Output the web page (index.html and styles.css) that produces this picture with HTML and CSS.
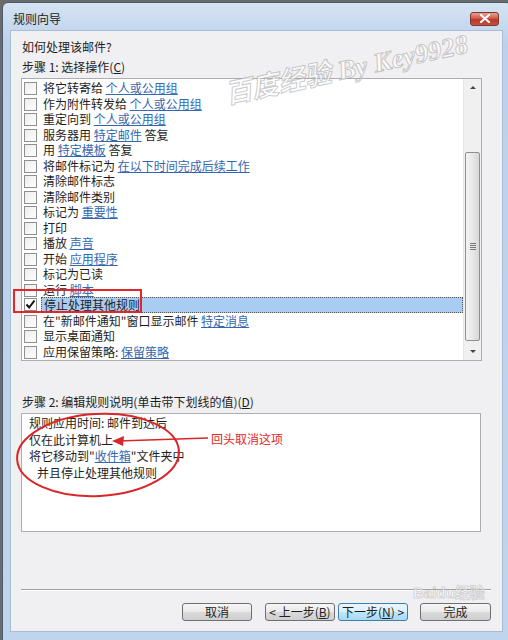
FILE: index.html
```html
<!DOCTYPE html>
<html>
<head>
    <meta charset="utf-8">
    <title>规则向导</title>
    <link rel="stylesheet" href="styles.css">
</head>
<body>
    <div class="window">
        <div class="titlebar">
            <span class="title">规则向导</span>
            <div class="close-btn">
                <svg width="12" height="9" viewBox="0 0 12 9"><path d="M2 1 L10 8 M10 1 L2 8" stroke="#fff" stroke-width="2.2" stroke-linecap="round"/></svg>
            </div>
        </div>

        <div class="client">
            <div class="label">如何处理该邮件?</div>
            <div class="label">步骤 1: 选择操作(<u>C</u>)</div>

            <div class="listbox">
                <div class="items">
                    <div class="row"><span class="check"></span>将它转寄给 <a>个人或公用组</a></div>
                    <div class="row"><span class="check"></span>作为附件转发给 <a>个人或公用组</a></div>
                    <div class="row"><span class="check"></span>重定向到 <a>个人或公用组</a></div>
                    <div class="row"><span class="check"></span>服务器用 <a>特定邮件</a> 答复</div>
                    <div class="row"><span class="check"></span>用 <a>特定模板</a> 答复</div>
                    <div class="row"><span class="check"></span>将邮件标记为 <a>在以下时间完成后续工作</a></div>
                    <div class="row"><span class="check"></span>清除邮件标志</div>
                    <div class="row"><span class="check"></span>清除邮件类别</div>
                    <div class="row"><span class="check"></span>标记为 <a>重要性</a></div>
                    <div class="row"><span class="check"></span>打印</div>
                    <div class="row"><span class="check"></span>播放 <a>声音</a></div>
                    <div class="row"><span class="check"></span>开始 <a>应用程序</a></div>
                    <div class="row"><span class="check"></span>标记为已读</div>
                    <div class="row"><span class="check"></span>运行 <a>脚本</a></div>
                    <div class="row selected"><span class="check"><svg width="11" height="11" viewBox="0 0 11 11"><path d="M1.5 5.5 L4.2 8.5 L9.5 1.5" fill="none" stroke="#111" stroke-width="2"/></svg></span><span class="sel-text">停止处理其他规则</span></div>
                    <div class="row"><span class="check"></span>在"新邮件通知"窗口显示邮件 <a>特定消息</a></div>
                    <div class="row"><span class="check"></span>显示桌面通知</div>
                    <div class="row"><span class="check"></span>应用保留策略: <a>保留策略</a></div>
                </div>
                <div class="scrollbar">
                    <div class="arrow up"></div>
                    <div class="track">
                        <div class="thumb"><span class="grip"></span></div>
                    </div>
                    <div class="arrow down"></div>
                </div>
            </div>

            <div class="label step2">步骤 2: 编辑规则说明(单击带下划线的值)(<u>D</u>)</div>
            <div class="desc">
                <div>规则应用时间: 邮件到达后</div>
                <div>仅在此计算机上</div>
                <div>将它移动到"<a>收件箱</a>"文件夹中</div>
                <div class="indent">并且停止处理其他规则</div>
            </div>

            <div class="sep"></div>

            <div class="buttons">
                <div class="button">取消</div>
                <div class="button pair">&lt; 上一步(<u>B</u>)</div>
                <div class="button default">下一步(<u>N</u>) &gt;</div>
                <div class="button last">完成</div>
            </div>
        </div>

        <div class="red-box"></div>
        <svg class="marks" width="508" height="640" viewBox="0 0 508 640">
            <ellipse cx="98" cy="454" rx="81" ry="41" fill="none" stroke="#d8262a" stroke-width="2" transform="rotate(-3 98 454)"/>
            <path d="M208 437 L118 440" stroke="#d8262a" stroke-width="1.6"/>
            <path d="M112 440 L124 435 L123 445 Z" fill="#d8262a"/>
        </svg>
        <div class="note">回头取消这项</div>
        <div class="watermark">百度经验 By Key9928</div>
        <div class="watermark-small">Baidu经验</div>
    </div>
</body>
</html>
```

FILE: styles.css
```css
body {
    margin: 0;
    background: #6b6b6b;
    font-family: "Noto Sans CJK SC", "Noto Sans", sans-serif;
    font-size: 12px;
    color: #1e1e1e;
    overflow: hidden;
}
.window {
    position: relative;
    margin: 2px 0 0 2px;
    width: 510px;
    height: 650px;
    background: linear-gradient(to bottom, #d5e3f3, #bcd2ec 40px, #bfd5ee);
    border: 1px solid #4a5a70;
    border-radius: 6px 6px 0 0;
    box-sizing: border-box;
    padding: 0 0 0 7px;
}
.titlebar {
    height: 27px;
    display: flex;
    align-items: center;
    justify-content: space-between;
    padding-right: 10px;
}
.title {
    padding-left: 3px;
    padding-top: 4px;
    color: #222;
}
.close-btn {
    width: 29px;
    height: 14px;
    margin-top: 4px;
    border: 1px solid #7a3a30;
    border-radius: 3px;
    background: linear-gradient(to bottom, #e8a090, #cf5a48 45%, #b8382a 55%, #c8503e);
    display: flex;
    align-items: center;
    justify-content: center;
    box-sizing: border-box;
    position: relative;
    left: -2px;
}
.client {
    width: 493px;
    height: 602px;
    background: #f0eff1;
    border: 1px solid #a9bcd3;
    box-sizing: border-box;
    padding: 6px 11px 0 10px;
}
.label {
    line-height: 20px;
    padding-left: 1px;
}
.step2 {
    margin-top: 31px;
}
.listbox {
    margin-top: 1px;
    width: 461px;
    height: 283px;
    background: #fff;
    border: 1px solid #abadb3;
    box-sizing: border-box;
    display: flex;
}
.items {
    flex: 1;
    padding-top: 1px;
}
.row {
    height: 15.5px;
    line-height: 15.5px;
    white-space: nowrap;
}
.check {
    display: inline-flex;
    align-items: center;
    justify-content: center;
    width: 13px;
    height: 13px;
    margin: 0 6px 0 2px;
    vertical-align: -2px;
    border: 1px solid #8e8f8f;
    background: linear-gradient(135deg, #ececec, #fff);
    box-sizing: border-box;
}
.row.selected {
    display: flex;
    align-items: center;
}
.row.selected .check {
    flex: none;
    background: #fff;
}
.row a {
    color: #3467b0;
    text-decoration: underline;
}
.row.selected .sel-text {
    flex: 1;
    align-self: stretch;
    margin-left: -2px;
    padding-left: 2px;
    background: #a9cdf2;
    border: 1px dotted #555;
    box-sizing: border-box;
    line-height: 13px;
}
.scrollbar {
    width: 17px;
    background: #f0f0f0;
    border-left: 1px solid #e6e6e6;
    display: flex;
    flex-direction: column;
}
.arrow {
    height: 17px;
    display: flex;
    align-items: center;
    justify-content: center;
}
.arrow::before {
    content: "";
    border-left: 3px solid transparent;
    border-right: 3px solid transparent;
}
.arrow.up::before {
    border-bottom: 3px solid #444;
}
.arrow.down::before {
    border-top: 3px solid #444;
}
.track {
    flex: 1;
    padding-top: 56px;
    padding-bottom: 2px;
    display: flex;
    flex-direction: column;
}
.thumb {
    flex: 1;
    margin: 0 1px;
    border: 1px solid #8e9197;
    border-radius: 2px;
    background: linear-gradient(to right, #f3f3f3, #e8e8e8 50%, #d6d6d6);
    display: flex;
    align-items: center;
    justify-content: center;
}
.grip {
    width: 6px;
    height: 7px;
    background: repeating-linear-gradient(to bottom, #777 0 1px, transparent 1px 2px);
}
.desc {
    margin-top: 1px;
    width: 460px;
    height: 119px;
    background: #fff;
    border: 1px solid #abadb3;
    box-sizing: border-box;
    padding: 1px 0 0 7px;
    line-height: 16.5px;
}
.desc a {
    color: #3467b0;
    text-decoration: underline;
}
.indent {
    padding-left: 8px;
}
.sep {
    margin-top: 57px;
    height: 1px;
    background: #a0a0a0;
    border-bottom: 1px solid #fff;
}
.buttons {
    margin-top: 12px;
    display: flex;
    justify-content: flex-end;
}
.button {
    width: 70px;
    height: 18px;
    line-height: 16px;
    text-align: center;
    border: 1px solid #707070;
    border-radius: 3px;
    background: linear-gradient(to bottom, #f6f6f6, #e9e9e9 50%, #dadada 51%, #cfcfcf);
    box-sizing: border-box;
    margin-left: 13px;
}
.button.default {
    margin-left: 3px;
    border-color: #3c7fb1;
    background: linear-gradient(to bottom, #eaf6fd, #d9f0fc 50%, #bee6fd 51%, #a7d9f5);
}
.button.last {
    margin-left: 12px;
    width: 71px;
}
.red-box {
    position: absolute;
    left: 10px;
    top: 286px;
    width: 129px;
    height: 24px;
    border: 2px solid #e2262a;
    box-sizing: border-box;
}
.marks {
    position: absolute;
    left: -3px;
    top: -2px;
    pointer-events: none;
}
.note {
    position: absolute;
    left: 208px;
    top: 427px;
    color: #e2262a;
    font-size: 12px;
}
.watermark {
    position: absolute;
    left: 222px;
    top: 70px;
    font-size: 27px;
    font-style: italic;
    font-weight: bold;
    font-family: "Liberation Serif", "Noto Sans CJK SC", serif;
    color: rgba(255, 255, 255, 0.7);
    -webkit-text-stroke: 1px rgba(150, 150, 150, 0.5);
    transform: rotate(-12deg);
    transform-origin: left center;
    white-space: nowrap;
}
.watermark-small {
    position: absolute;
    left: 410px;
    top: 578px;
    font-size: 15px;
    font-weight: bold;
    font-family: "Liberation Sans", "Noto Sans CJK SC", sans-serif;
    color: rgba(255, 255, 255, 0.6);
    -webkit-text-stroke: 1px rgba(170, 170, 170, 0.45);
}
```
